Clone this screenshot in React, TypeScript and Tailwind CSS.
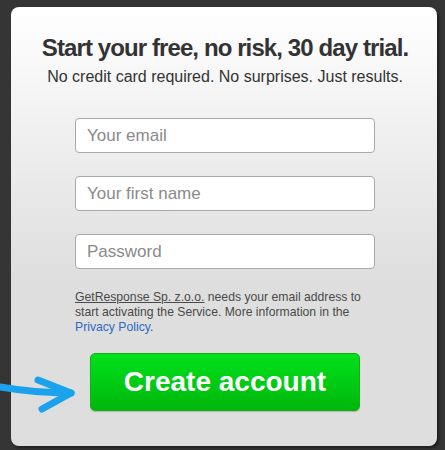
import React from 'react';

// Signup card: dark page, light gradient panel, three fields, green CTA.
const FONT = { fontFamily: '"Liberation Sans", Arial, sans-serif' };

const Field = ({ placeholder, type = 'text' }: { placeholder: string; type?: string }) => (
  <input
    type={type}
    placeholder={placeholder}
    className="h-[35px] w-[300px] rounded-[4px] border border-[#a9a9a9] bg-white px-[11px] text-[17px] text-[#333] placeholder:text-[#8a8a8a] outline-none"
  />
);

const App = () => {
  return (
    <div className="min-h-[450px] w-full bg-[#353535] pl-[11px] pr-[8px] pt-[7px]" style={FONT}>
      <div className="relative h-[439px] w-[426px] rounded-[8px] bg-[linear-gradient(to_bottom,#ffffff_0%,#dedede_62%,#dedede_100%)] shadow-[2px_2px_3px_rgba(0,0,0,0.45)]">
        <div className="flex flex-col items-center pl-[2px] pt-[27px]">
          <h1 className="text-[24px] font-bold leading-[28px] tracking-[-0.9px] text-[#333]">
            Start your free, no risk, 30 day trial.
          </h1>
          <p className="mt-[5px] text-[16px] leading-[20px] text-[#333]">
            No credit card required. No surprises. Just results.
          </p>

          <div className="mt-[31px] flex flex-col gap-[23px]">
            <Field placeholder="Your email" type="email" />
            <Field placeholder="Your first name" />
            <Field placeholder="Password" type="password" />
          </div>

          <p className="mt-[21px] w-[300px] text-[12.2px] leading-[15px] text-[#4a4a4a]">
            <span className="underline">GetResponse Sp. z.o.o.</span> needs your email address to start
            activating the Service. More information in the{' '}
            <span className="text-[#2d6bc4]">Privacy Policy</span>.
          </p>

          <button className="mt-[18px] h-[58px] w-[270px] rounded-[5px] border border-[#12b012] bg-[linear-gradient(to_bottom,#00e21c_0%,#00c812_60%,#00b60c_100%)] text-[28px] font-bold text-white shadow-[0_1px_1px_rgba(0,0,0,0.2)]">
            Create account
          </button>
        </div>

        {/* hand-drawn arrow pointing at the button */}
        <svg className="absolute left-[-11px] top-[362px]" width="80" height="46" viewBox="0 0 80 46">
          <path d="M0 18 Q 35 24 71 24" fill="none" stroke="#1aa3ec" strokeWidth="7" strokeLinecap="round" />
          <path d="M38 11 L71 24 L42 40" fill="none" stroke="#1aa3ec" strokeWidth="7" strokeLinecap="round" strokeLinejoin="round" />
        </svg>
      </div>
    </div>
  );
};

export default App;
